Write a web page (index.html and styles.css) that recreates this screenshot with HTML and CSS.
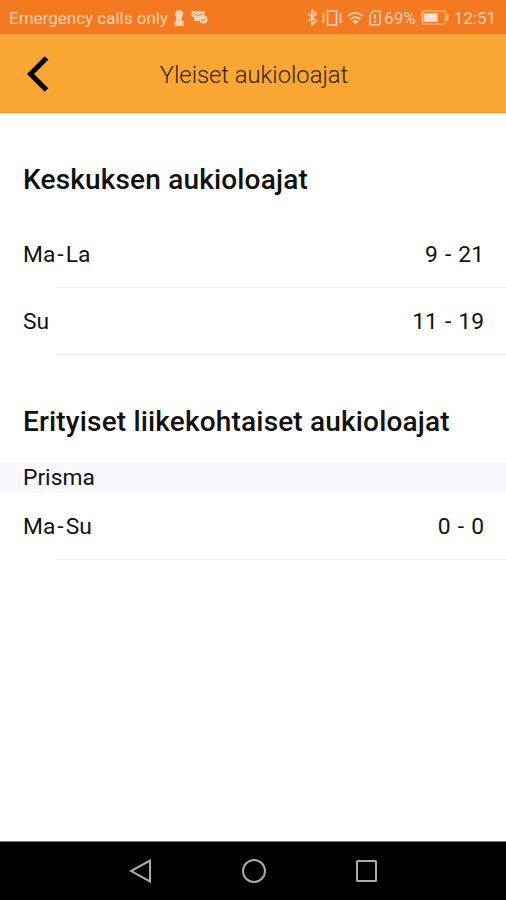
FILE: index.html
```
<!DOCTYPE html>
<html lang="fi">
<head>
  <meta charset="UTF-8">
  <meta name="viewport" content="width=device-width, initial-scale=1.0">
  <title>Yleiset aukioloajat</title>
  <link rel="stylesheet" href="styles.css">
</head>
<body>
  <div class="status-bar">
    <span class="carrier">Emergency calls only</span>
    <svg class="icon-keyhole" width="10" height="16" viewBox="0 0 10 16"><path d="M5 0a4 4 0 0 1 2.800 7L8 11h1.500v5h-9v-5H2l.2-4A4 4 0 0 1 5 0z"/></svg>
    <svg class="icon-card" width="17" height="13" viewBox="0 0 17 13"><path d="M.5 0h13v6H9l-1 4H3V6.500L.5 5z"/><path class="cut" d="M2 2.500l5 2 5-2"/><circle cx="12.500" cy="8.500" r="4"/><path class="cut" d="M10.500 8.500l1.500 1.500 2.500-2.500"/></svg>
    <div class="status-icons">
      <svg class="icon-bluetooth" width="11" height="17" viewBox="0 0 11 17"><path d="M1 4.500l8 7.500-4 4V1l4 4-8 7.500"/></svg>
      <svg class="icon-vibrate" width="20" height="16" viewBox="0 0 20 16"><path d="M5.500 1h9v14h-9zM1.500 3v10M18.500 3v10"/></svg>
      <svg class="icon-wifi" width="17" height="14" viewBox="0 0 17 14"><path d="M1 5.200q7.500-6.500 15 0M3.500 8.200q5-4.300 10 0"/><path class="fill" d="M5.500 10.300q3-2.400 6 0L8.500 13.500z"/></svg>
      <svg class="icon-sim" width="12" height="16" viewBox="0 0 12 16"><path d="M4.500 1H10q1 0 1 1v12q0 1-1 1H2q-1 0-1-1V4.500zM6 4.500v5M6 11v2"/></svg>
      <span class="percent">69%</span>
      <svg class="icon-battery" width="28" height="15" viewBox="0 0 28 15"><rect class="shell" x="1" y="1" width="23.500" height="13" rx="2"/><rect class="level" x="2.500" y="3" width="14" height="9"/><path d="M26.500 4.500v6"/></svg>
      <span class="clock">12:51</span>
    </div>
  </div>

  <header class="header">
    <button class="back" aria-label="Takaisin">
      <svg width="22" height="36" viewBox="0 0 22 36"><path d="M19.500 2L3.500 18l16 16"/></svg>
    </button>
    <h1>Yleiset aukioloajat</h1>
  </header>

  <main>
    <section class="center-hours">
      <h2>Keskuksen aukioloajat</h2>
      <div class="row"><span>Ma<span class="dash">-</span>La</span><span class="hours">9 - 21</span></div>
      <div class="row"><span>Su</span><span class="hours">11 - 19</span></div>
    </section>
    <section class="shop-hours">
      <h2>Erityiset liikekohtaiset aukioloajat</h2>
      <h3>Prisma</h3>
      <div class="row"><span>Ma<span class="dash">-</span>Su</span><span class="hours">0 - 0</span></div>
    </section>
  </main>

  <nav class="nav-bar">
    <svg width="24" height="26" viewBox="0 0 24 26"><path d="M21 2.500v21L2 13z"/></svg>
    <svg width="26" height="26" viewBox="0 0 26 26"><circle cx="13" cy="13" r="11"/></svg>
    <svg width="24" height="24" viewBox="0 0 24 24"><rect x="2" y="2" width="19" height="20" rx="0.500"/></svg>
  </nav>
</body>
</html>
```
FILE: styles.css
```
body {
  margin: 0;
  height: 900px;
  display: flex;
  flex-direction: column;
  overflow: hidden;
  font-family: Roboto, sans-serif;
  background-color: #fff;
  color: #111;
}
svg {
  display: block;
  flex: none;
}
h1, h2, h3 {
  margin: 0;
}

.status-bar {
  display: flex;
  align-items: center;
  height: 34px;
  padding: 1px 10px 0 9px;
  box-sizing: border-box;
  background-color: #f47920;
  color: #ffd3b3;
  font-size: 17px;
  white-space: nowrap;
}
.status-bar svg {
  fill: none;
  stroke: #ffd3b3;
  stroke-width: 1.6;
}
.status-bar .icon-keyhole {
  margin-left: 6px;
  fill: #ffd3b3;
  stroke: none;
}
.status-bar .icon-card {
  margin-left: 7px;
  fill: #ffd3b3;
  stroke: none;
}
.icon-card .cut {
  fill: none;
  stroke: #f47920;
  stroke-width: 0.8;
}
.status-icons {
  display: flex;
  align-items: center;
  margin-left: auto;
}
.icon-vibrate {
  margin-left: 4px;
}
.icon-wifi {
  margin-left: 5px;
}
.icon-wifi .fill {
  fill: #ffd3b3;
  stroke: none;
}
.icon-sim {
  margin-left: 5px;
}
.percent {
  margin-left: 3px;
}
.icon-battery {
  margin-left: 5px;
}
.icon-battery .shell {
  stroke: #fbab73;
}
.icon-battery .level {
  fill: #ffe0cc;
  stroke: none;
}
.clock {
  margin-left: 5px;
}

.header {
  display: grid;
  grid-template-columns: 78px 1fr 78px;
  align-items: center;
  height: 79px;
  box-sizing: border-box;
  border-bottom: 1px solid #f2982a;
  background-color: #faa632;
}
.back {
  padding: 1px 0 0 27px;
  border: none;
  background: none;
}
.back svg {
  fill: none;
  stroke: #000;
  stroke-width: 5;
}
.header h1 {
  padding: 3px 0 0 2px;
  font-size: 23.8px;
  font-weight: 300;
  text-align: center;
  color: #332107;
}

main {
  flex: 1;
}
h2 {
  padding-left: 23px;
  font-size: 28px;
  font-weight: 500;
  line-height: 36px;
  letter-spacing: 0.17px;
}
.center-hours {
  padding-top: 49px;
}
.center-hours h2 {
  margin-bottom: 23px;
}
.shop-hours {
  padding-top: 49px;
}
.shop-hours h2 {
  margin-bottom: 22px;
}
h3 {
  padding: 1px 0 0 23px;
  font-size: 22.8px;
  font-weight: 400;
  line-height: 30px;
  background-color: #f9f7ff;
}
.row {
  display: flex;
  justify-content: space-between;
  height: 67px;
  padding: 0 22px 0 23px;
  font-size: 22.8px;
  line-height: 68px;
  /* divider starts after the left inset */
  background: linear-gradient(#efefef, #efefef) no-repeat 56px 100% / 100% 1px;
}
.dash {
  margin: 0 2px;
}
.hours {
  word-spacing: 1.5px;
}

.nav-bar {
  display: flex;
  align-items: center;
  justify-content: center;
  gap: 88px;
  height: 59px;
  padding-left: 1px;
  box-sizing: border-box;
  border-top: 1px solid #777;
  background-color: #000;
}
.nav-bar svg {
  fill: none;
  stroke: #aaa;
  stroke-width: 2;
}
```
